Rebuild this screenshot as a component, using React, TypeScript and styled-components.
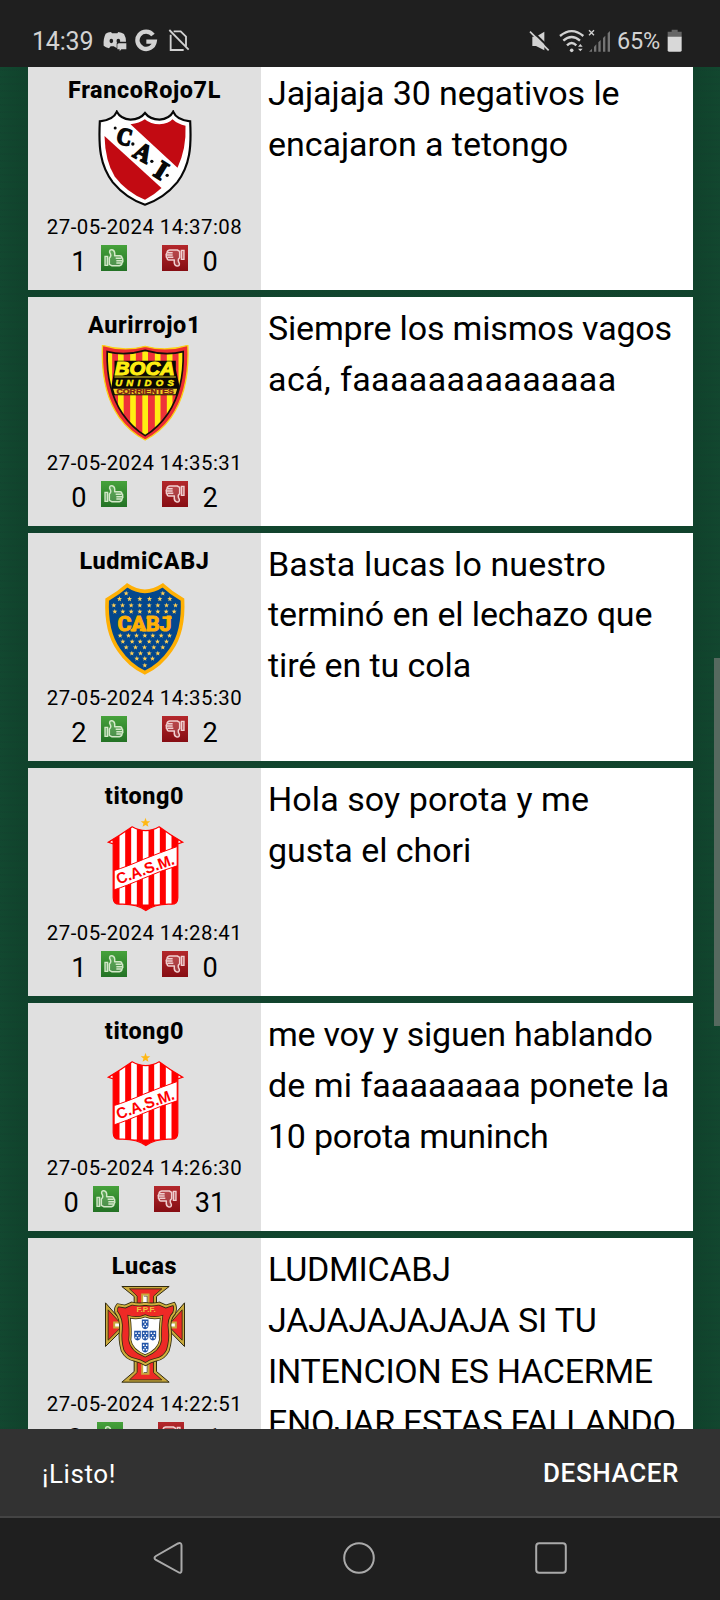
import React from "react";
import styled, { createGlobalStyle } from "styled-components";

const Global = createGlobalStyle`
  * { box-sizing: border-box; }
  body { margin: 0; background: #1f1f1f; font-family: Roboto, sans-serif; }
  svg { display: block; flex: none; }
`;

const Screen = styled.div`
  width: 720px;
  height: 1600px;
  display: flex;
  flex-direction: column;
  overflow: hidden;
`;

const StatusBar = styled.header`
  height: 67px;
  flex: none;
  display: flex;
  justify-content: space-between;
  align-items: center;
  padding: 14px 38px 0 32px;
  background: #1f1f1f;
  color: #d2d2d2;
`;

const StatusGroup = styled.div`
  display: flex;
  align-items: center;
`;

const StatusText = styled.span<{ $width: number; $size: number }>`
  width: ${(p) => p.$width}px;
  padding-top: 2px;
  font-size: ${(p) => p.$size}px;
  line-height: 29px;
  letter-spacing: -0.2px;
  white-space: nowrap;
`;

const Gap = styled.span<{ $size: number }>`
  width: ${(p) => p.$size}px;
`;

const Feed = styled.main`
  position: relative;
  flex: 1;
  min-height: 0;
  overflow: hidden;
  padding: 0 27px 0 28px;
  background:
    repeating-linear-gradient(0deg, rgba(20, 60, 46, 0.2) 0 2px, transparent 2px 7px),
    linear-gradient(90deg, #124830 0, #10432c 24px, #11462e 360px, #10432c 698px, #12472f 720px);
`;

const List = styled.div`
  display: flex;
  flex-direction: column;
  gap: 7px;
  margin-top: -4.9px;
`;

const Row = styled.article`
  display: flex;
  flex: none;
  height: 228.25px;
`;

const Author = styled.section`
  width: 233px;
  flex: none;
  display: flex;
  flex-direction: column;
  align-items: center;
  background: #e0e0e0;
  color: #000;
`;

const Name = styled.h2`
  margin: 12px 0 0;
  font-size: 23.4px;
  line-height: 32px;
  font-weight: 850;
  letter-spacing: 0.6px;
`;

const CrestSlot = styled.div`
  height: 96px;
  margin-top: 4px;
`;

const Stamp = styled.time`
  margin-top: 6.3px;
  font-size: 20.4px;
  line-height: 30px;
  letter-spacing: 0.46px;
  white-space: nowrap;
`;

const Votes = styled.div`
  display: flex;
  align-items: flex-start;
  gap: 14.4px;
  margin-top: 2.9px;
  font-size: 27.2px;
  line-height: 32px;
`;

const ThumbPair = styled.div`
  display: flex;
  gap: 35px;
`;

const Count = styled.span`
  padding-top: 1.2px;
  letter-spacing: 0.1px;
`;

const Message = styled.p`
  flex: 1;
  margin: 0;
  padding: 5.95px 0 0 7px;
  background: #fff;
  color: #000;
  font-size: 34px;
  line-height: 50.9px;
  white-space: pre-line;
`;

const Line = styled.span<{ $spacing: number }>`
  display: block;
  letter-spacing: ${(p) => p.$spacing}px;
`;

const ScrollThumb = styled.div`
  position: absolute;
  top: 591px;
  right: 0;
  width: 6px;
  height: 368px;
  background: #56695f;
`;

const Snackbar = styled.div`
  height: 87px;
  flex: none;
  display: flex;
  align-items: center;
  justify-content: space-between;
  padding: 1px 41px 0 42px;
  background: #323232;
  color: #fff;
`;

const Notice = styled.span`
  padding-top: 2px;
  font-size: 26px;
  letter-spacing: 0.6px;
`;

const Undo = styled.button`
  border: 0;
  padding: 0;
  background: none;
  color: #fff;
  font: 500 26px Roboto, sans-serif;
  letter-spacing: 0.6px;
`;

const NavBar = styled.nav`
  height: 84px;
  flex: none;
  display: flex;
  justify-content: center;
  gap: 160px;
  padding: 24px 2px 0 0;
  border-top: 2px solid #444;
  background: #1f1f1f;
`;

const BannerIcons = () => (
  <>
    <svg width="24" height="24" viewBox="308 86 72 72">
      <path
        fill="#d2d2d2"
        d="M316 100Q322 96 332 95L335 99H351L354 95Q364 97 371 101Q377 111 377 124H352Q349 126 349 130V143L340 138H331L326 144Q316 141 310 136Q308 115 316 100Z"
      />
      <path fill="#d2d2d2" d="M354 129H378V147H363L358 153V147H351V132Z" />
      <ellipse cx="333" cy="122" rx="5.5" ry="6.5" fill="#1f1f1f" />
      <ellipse cx="354" cy="122" rx="5.5" ry="6.5" fill="#1f1f1f" />
    </svg>
    <Gap $size={8} />
    <svg width="24" height="24" viewBox="404 84 72 72">
      <path d="M458 102A26 26 0 1 0 463 122H438" fill="none" stroke="#d2d2d2" strokeWidth="13" />
    </svg>
    <Gap $size={9} />
    <svg width="24" height="24" viewBox="503 86 72 72">
      <path d="M520 93H541L557 109V138M511 103V149H550" fill="none" stroke="#d2d2d2" strokeWidth="5.500" />
      <path d="M507 89L565 148" stroke="#d2d2d2" strokeWidth="5.500" />
    </svg>
  </>
);

const SignalIcons = () => (
  <>
    <svg width="22" height="24" viewBox="508 84 66 72">
      <path d="M518 107H529L554 92V148L529 135H518Z" fill="#d2d2d2" />
      <path d="M514 87L572 143" stroke="#1f1f1f" strokeWidth="6" />
      <path d="M511 92L567 148" stroke="#d2d2d2" strokeWidth="5" />
    </svg>
    <Gap $size={8} />
    <svg width="54" height="24" viewBox="598 84 162 72">
      <g fill="none" stroke="#d2d2d2" strokeWidth="7">
        <path d="M601 105Q636 76 671 105" />
        <path d="M611 119Q636 97 661 119" />
        <path d="M622 133Q636 119 650 133" />
      </g>
      <circle cx="636" cy="148" r="5.5" fill="#d2d2d2" />
      <path d="M655 137L662 129L669 137ZM655 143L662 151L669 143Z" fill="#d2d2d2" />
      <path d="M688 88L703 103M703 88L688 103" stroke="#d2d2d2" strokeWidth="4" />
      <g fill="#747474">
        <path d="M688 152L697 143V152Z" />
        <path d="M703 137L710 130V152H703Z" />
        <path d="M716 124L723 117V152H716Z" />
        <path d="M730 111L737 104V152H730Z" />
        <path d="M744 97L751 90V152H744Z" />
      </g>
    </svg>
  </>
);

const Battery = () => (
  <svg width="15" height="24" viewBox="922 85 45 72">
    <path d="M936 87H954V93H966V110H924V93H936Z" fill="#666" />
    <path d="M924 108H966V149Q966 153 962 153H928Q924 153 924 149Z" fill="#d8d8d8" />
  </svg>
);

const HandShape = ({ line }: { line: string }) => (
  <g stroke={line}>
    <path d="M12 34H20V61H12Z" fill="#fff" fillOpacity=".35" strokeWidth="4" />
    <path
      d="M25 39Q33 33 26 22Q25 13 33 14Q43 16 41 32H57Q63 33 62 37Q66 39 65 45Q67 49 63 53Q63 61 55 62H32L25 58Z"
      fill="#fff"
      fillOpacity=".16"
      strokeWidth="4.500"
      strokeLinejoin="round"
    />
    <path d="M44 40H62M46 47H63M46 54H61" strokeWidth="4.500" />
  </g>
);

const ThumbUp = () => (
  <svg width="26" height="26" viewBox="0 0 78 78">
    <defs>
      <linearGradient id="up" x1="0" y1="0" x2="0" y2="1">
        <stop offset="0" stopColor="#46a23b" />
        <stop offset="1" stopColor="#237225" />
      </linearGradient>
    </defs>
    <rect width="78" height="78" fill="url(#up)" />
    <HandShape line="#d3e8c8" />
  </svg>
);

const ThumbDown = () => (
  <svg width="26" height="26" viewBox="0 0 78 78">
    <defs>
      <linearGradient id="down" x1="0" y1="0" x2="0" y2="1">
        <stop offset="0" stopColor="#b4282c" />
        <stop offset="1" stopColor="#860d13" />
      </linearGradient>
    </defs>
    <rect width="78" height="78" fill="url(#down)" />
    <g transform="rotate(180 39 38.5)">
      <HandShape line="#f0cfd0" />
    </g>
  </svg>
);

const Independiente = () => (
  <svg width="96" height="96" viewBox="289.5 150 288 288">
    <path
      d="M349 155Q360 176 390 179Q419 178 433.500 159Q448 178 477 179Q507 176 518 155Q528 180 569 184C573 260 569 315 530 367Q490 415 433.500 434Q377 415 337 367C298 315 294 260 298 184Q339 180 349 155Z"
      fill="#fff"
      stroke="#080808"
      strokeWidth="6.500"
    />
    <path d="M390 193Q417 190 433 178Q450 193 477 193Q504 191 516 178Q532 193 555 197Q558 265 531 323Z" fill="#c20a12" />
    <path d="M312 228L483 384Q461 405 433.500 419Q379 397 343 350Q314 305 312 228Z" fill="#c20a12" />
    <g fontFamily="Liberation Serif, serif" fontWeight="700" fill="#080808" stroke="#080808" strokeWidth="5">
      <text x="0" y="0" fontSize="73" transform="translate(344 248) rotate(14) scale(.86 1)">C</text>
      <text x="0" y="0" fontSize="76" transform="translate(394 288) rotate(28) scale(.92 1)">A</text>
      <text x="0" y="0" fontSize="80" transform="translate(455 345) rotate(32) scale(1 1)">I</text>
    </g>
    <g fill="#080808">
      <circle cx="344" cy="204" r="4.500" />
      <circle cx="397" cy="252" r="5" />
      <circle cx="454" cy="304" r="5" />
      <circle cx="500" cy="346" r="5" />
    </g>
  </svg>
);

const BOCA_OUTLINE =
  "M306 152Q370 172 434 155Q498 172 562 152C566 245 549 315 512 368Q480 412 434 436Q388 412 356 368C319 315 302 245 306 152Z";
const BOCA_FIELD =
  "M320 171Q375 184 434 167Q493 184 548 171C550 245 535 308 502 357Q474 398 434 423Q394 398 366 357C333 308 318 245 320 171Z";

const BocaUnidos = () => (
  <svg width="96" height="96" viewBox="289.5 151 288 288">
    <defs>
      <clipPath id="boca-unidos">
        <path d={BOCA_FIELD} />
      </clipPath>
    </defs>
    <path d={BOCA_OUTLINE} fill="#ec2c32" stroke="#fbd217" strokeWidth="4" />
    <g clipPath="url(#boca-unidos)">
      <rect x="300" y="150" width="270" height="290" fill="#ef3239" />
      {[318, 352.5, 389, 425.5, 463, 499, 534].map((x) => (
        <rect key={x} x={x} y="150" width="17" height="290" fill="#ffee12" />
      ))}
      <path d="M342 198H526V224L538 280L548 270V302H320V270L332 280L342 224Z" fill="#0b0803" />
    </g>
    <path d={BOCA_FIELD} fill="none" stroke="#17100a" strokeWidth="5" />
    <path d="M338 282H530L525 299H343Z" fill="#f3cf25" />
    <path d="M342 247H526" stroke="#e9d321" strokeWidth="3" />
    <g fontFamily="Liberation Sans, sans-serif" fontWeight="700" fontStyle="italic" fill="#ffee12" stroke="#ffee12">
      <text x="343" y="241" fontSize="54" textLength="180" lengthAdjust="spacingAndGlyphs" strokeWidth="3">BOCA</text>
      <text x="344" y="274" fontSize="29" textLength="176" strokeWidth="1.500">UNIDOS</text>
    </g>
    <text x="348" y="297" fontFamily="Liberation Sans, sans-serif" fontWeight="700" fontSize="19" textLength="172" lengthAdjust="spacingAndGlyphs" fill="#7a1b14" stroke="#7a1b14">CORRIENTES</text>
  </svg>
);

const starPoints = (cx: number, cy: number, r: number) =>
  Array.from({ length: 10 }, (_, i) => {
    const a = (Math.PI * i) / 5 - Math.PI / 2;
    const q = i % 2 ? r * 0.42 : r;
    return `${(cx + q * Math.cos(a)).toFixed(1)},${(cy + q * Math.sin(a)).toFixed(1)}`;
  }).join(" ");

const CABJ_STARS: [number, number[]][] = [
  [189, [377, 487]],
  [206, [357, 387, 418, 447, 478, 508]],
  [225, [340, 366, 392, 418, 446, 472, 498, 525]],
  [244, [343, 367, 392, 418, 447, 472, 497, 521]],
  [316, [359, 384, 408, 433, 457, 482, 507]],
  [334, [367, 395, 419, 446, 471, 498]],
  [351, [377, 405, 432, 460, 487]],
  [369, [394, 420, 446, 472]],
  [385, [409, 433, 456]],
  [405, [433]],
];

const BocaJuniors = () => (
  <svg width="96" height="96" viewBox="289.5 152 288 288">
    <path
      d="M380 165Q433 201 487 165Q513 189 546 208C549 268 541 317 511 359Q480 405 433 427Q386 405 355 359C325 317 317 268 320 208Q353 189 380 165Z"
      fill="#04478c"
      stroke="#ffb005"
      strokeWidth="11"
    />
    <g fill="#ffcf55">
      {CABJ_STARS.flatMap(([y, xs]) => xs.map((x) => <polygon key={`${x}-${y}`} points={starPoints(x, y, 8)} />))}
    </g>
    <text
      x="351"
      y="302"
      fontFamily="Roboto, sans-serif"
      fontWeight="700"
      fontSize="62"
      textLength="162"
      lengthAdjust="spacingAndGlyphs"
      fill="#ffb005"
      stroke="#ffb005"
      strokeWidth="3"
    >
      CABJ
    </text>
    <path d="M390 299H408M418 299H436M438 262H448M438 299H448M486 262H514" stroke="#ffb005" strokeWidth="8" />
  </svg>
);

const CASM_OUTLINE =
  "M395 185Q436 208 476 185Q506 208 547 231L532 236V398Q532 418 512 417Q465 415 436 436Q407 415 358 417Q338 418 338 398V236L323 231Q360 210 395 185Z";

const SanMartin = () => (
  <svg width="96" height="96" viewBox="289.5 152.5 288 288">
    <defs>
      <clipPath id="san-martin">
        <path d={CASM_OUTLINE} />
      </clipPath>
    </defs>
    <polygon points={starPoints(435, 173, 15)} fill="#ffb814" />
    <g clipPath="url(#san-martin)">
      <rect x="320" y="180" width="230" height="260" fill="#f00" />
      {[357, 392, 427, 461, 496].map((x) => (
        <rect key={x} x={x} y="180" width="17" height="238" fill="#fff" />
      ))}
      <path d="M324 233L336 226V237ZM546 233L534 226V237Z" fill="#fff" />
      <path d="M341 316Q375 306 430 282Q480 262 530 244V302Q480 317 430 339Q375 363 341 374Z" fill="#fff" stroke="#f00" strokeWidth="3" />
    </g>
    <path d={CASM_OUTLINE} fill="none" stroke="#f00" strokeWidth="3.500" />
    <text
      transform="translate(354 358) rotate(-20)"
      fontFamily="Liberation Sans, sans-serif"
      fontWeight="700"
      fontSize="46"
      textLength="182"
      lengthAdjust="spacingAndGlyphs"
      fill="#f00"
    >
      C.A.S.M.
    </text>
  </svg>
);

const Quina = ({ x, y }: { x: number; y: number }) => (
  <g transform={`translate(${x} ${y})`}>
    <path d="M-10 -14H10V4Q10 13 0 15Q-10 13 -10 4Z" fill="#2355a8" />
    <g fill="#fff">
      <circle cx="-4.500" cy="-7" r="2.600" />
      <circle cx="4.500" cy="-7" r="2.600" />
      <circle cx="0" cy="0" r="2.600" />
      <circle cx="-4.500" cy="6.500" r="2.600" />
      <circle cx="4.500" cy="6.500" r="2.600" />
    </g>
  </g>
);

const FPF_SHIELD =
  "M434 222Q455 226 476 221L496 230L520 222Q527 232 521 250Q503 268 508 300Q512 330 502 362Q490 386 465 390Q448 394 435 403Q420 394 403 390Q378 386 366 362Q357 330 361 300Q364 268 347 246Q344 235 352 226L374 230L394 221Q415 226 434 222Z";
const FPF_INNER =
  "M386 261Q410 268 434 258Q458 268 483 261Q478 300 480 330Q476 361 434 378Q392 361 388 330Q391 300 386 261Z";

const Portugal = () => (
  <svg width="96" height="96" viewBox="289.5 168.500 288 288" overflow="visible">
    <path
      d="M364 170H506L468 200V268H510L552 219V350L510 307H468V425L506 457H364L401 425V307H358L315 350V219L358 268H401V200Z"
      fill="#c9a93c"
      stroke="#30290f"
      strokeWidth="3"
    />
    <path
      d="M387 177H484L459 199V277H512L545 240V331L512 297H459V428L484 450H387L410 428V297H357L323 331V240L357 277H410V199Z"
      fill="#ee2a26"
      stroke="#30290f"
      strokeWidth="2.500"
    />
    <path d="M425 194H444V225H425ZM425 396H444V432H425ZM341 278H365V293H341ZM503 278H526V293H503Z" fill="#fff" stroke="#c9a93c" strokeWidth="6" />
    <path d="M430 199H440V225M430 428H440V400" fill="none" stroke="#30290f" strokeWidth="2" />
    <path d={FPF_SHIELD} fill="#ee2a26" stroke="#30290f" strokeWidth="11" />
    <path d={FPF_SHIELD} fill="none" stroke="#d0b03e" strokeWidth="6" />
    <path d={FPF_INNER} fill="#fff" stroke="#30290f" strokeWidth="9" />
    <path d={FPF_INNER} fill="none" stroke="#d0b03e" strokeWidth="4.500" />
    <text x="408" y="247" fontFamily="Liberation Sans, sans-serif" fontWeight="700" fontSize="22" textLength="58" lengthAdjust="spacingAndGlyphs" fill="#ecc63f">
      F.P.F.
    </text>
    <Quina x={434} y={283} />
    <Quina x={411} y={317} />
    <Quina x={434} y={317} />
    <Quina x={457} y={317} />
    <Quina x={434} y={353} />
  </svg>
);

interface Post {
  name: string;
  crest: React.ReactNode;
  date: string;
  up: string;
  down: string;
  lines: [string, number][];
}

const POSTS: Post[] = [
  {
    name: "FrancoRojo7L",
    crest: <Independiente />,
    date: "27-05-2024 14:37:08",
    up: "1",
    down: "0",
    lines: [["Jajajaja 30 negativos le", -0.1], ["encajaron a tetongo", -0.05]],
  },
  {
    name: "Aurirrojo1",
    crest: <BocaUnidos />,
    date: "27-05-2024 14:35:31",
    up: "0",
    down: "2",
    lines: [["Siempre los mismos vagos", -0.18], ["acá, faaaaaaaaaaaaaa", 0.4]],
  },
  {
    name: "LudmiCABJ",
    crest: <BocaJuniors />,
    date: "27-05-2024 14:35:30",
    up: "2",
    down: "2",
    lines: [["Basta lucas lo nuestro", 0.12], ["terminó en el lechazo que", -0.11], ["tiré en tu cola", -0.1]],
  },
  {
    name: "titong0",
    crest: <SanMartin />,
    date: "27-05-2024 14:28:41",
    up: "1",
    down: "0",
    lines: [["Hola soy porota y me", 0.08], ["gusta el chori", -0.04]],
  },
  {
    name: "titong0",
    crest: <SanMartin />,
    date: "27-05-2024 14:26:30",
    up: "0",
    down: "31",
    lines: [["me voy y siguen hablando", -0.22], ["de mi faaaaaaaa ponete la", 0.05], ["10 porota muninch", -0.25]],
  },
  {
    name: "Lucas",
    crest: <Portugal />,
    date: "27-05-2024 14:22:51",
    up: "2",
    down: "-1",
    lines: [["LUDMICABJ", -0.25], ["JAJAJAJAJAJA SI TU", -0.15], ["INTENCION ES HACERME", -0.27], ["ENOJAR ESTAS FALLANDO", -0.28]],
  },
];

export default function App() {
  return (
    <Screen>
      <Global />
      <StatusBar>
        <StatusGroup>
          <StatusText $width={70.5} $size={25}>14:39</StatusText>
          <BannerIcons />
        </StatusGroup>
        <StatusGroup>
          <SignalIcons />
          <Gap $size={4} />
          <StatusText $width={50} $size={23.5}>65%</StatusText>
          <Battery />
        </StatusGroup>
      </StatusBar>
      <Feed>
        <List>
          {POSTS.map((post) => (
            <Row key={post.date}>
              <Author>
                <Name>{post.name}</Name>
                <CrestSlot>{post.crest}</CrestSlot>
                <Stamp>{post.date}</Stamp>
                <Votes>
                  <Count>{post.up}</Count>
                  <ThumbPair>
                    <ThumbUp />
                    <ThumbDown />
                  </ThumbPair>
                  <Count>{post.down}</Count>
                </Votes>
              </Author>
              <Message>
                {post.lines.map(([text, spacing]) => (
                  <Line key={text} $spacing={spacing}>
                    {text}
                  </Line>
                ))}
              </Message>
            </Row>
          ))}
        </List>
        <ScrollThumb />
      </Feed>
      <Snackbar>
        <Notice>¡Listo!</Notice>
        <Undo>DESHACER</Undo>
      </Snackbar>
      <NavBar>
        <svg width="32" height="32" viewBox="-1 0 32 32" fill="none" stroke="#aaa" strokeWidth="2">
          <path d="M4 14L26 1.500Q29.500 0 29.500 3.500V28.500Q29.500 32 26 30L4 18Q1 16 4 14Z" />
        </svg>
        <svg width="32" height="32" viewBox="0 0 32 32" fill="none" stroke="#aaa" strokeWidth="2">
          <circle cx="16" cy="16" r="14.800" />
        </svg>
        <svg width="32" height="32" viewBox="0 0 32 32" fill="none" stroke="#aaa" strokeWidth="2">
          <rect x="1.200" y="1.200" width="29.600" height="29.600" rx="3" />
        </svg>
      </NavBar>
    </Screen>
  );
}
